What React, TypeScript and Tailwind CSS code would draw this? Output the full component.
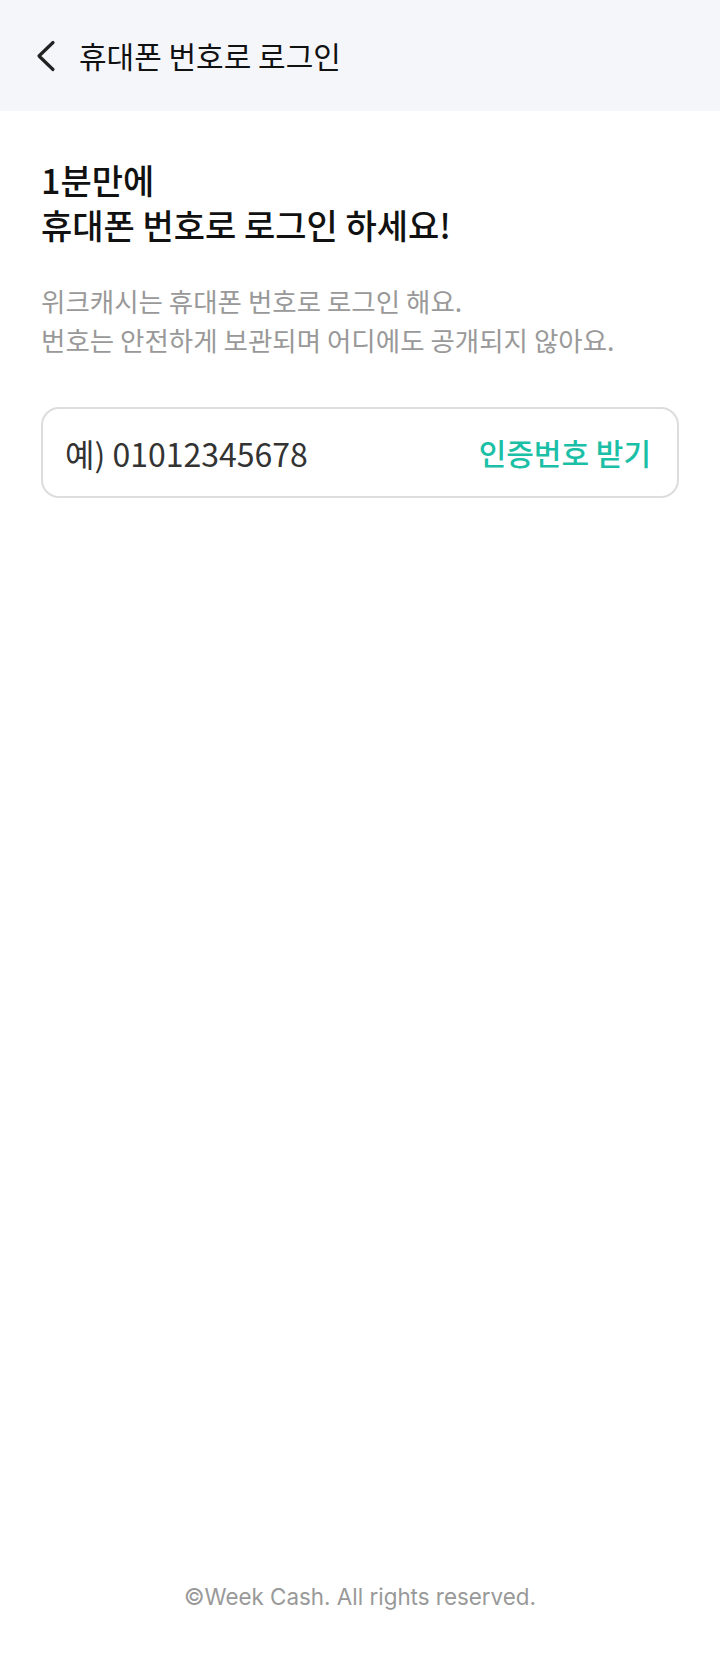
const kr = { fontFamily: '"Noto Sans CJK KR", "Noto Sans", sans-serif' }

function BackIcon() {
  return (
    <svg width="20" height="32" viewBox="0 0 20 32" fill="none" aria-hidden="true">
      <polyline
        points="17,2.5 3,16 17,29.5"
        stroke="#222"
        strokeWidth="3.2"
        strokeLinecap="round"
        strokeLinejoin="round"
      />
    </svg>
  )
}

export default function App() {
  return (
    <div className="min-h-screen bg-white flex flex-col" style={kr}>
      <header className="h-[111px] bg-[#f5f6fa] flex items-center pl-[36px]">
        <button className="flex items-center" aria-label="뒤로">
          <BackIcon />
        </button>
        <h1 className="ml-[23px] text-[30px] font-normal text-[#111]">휴대폰 번호로 로그인</h1>
      </header>

      <main className="flex-1 px-[41px] pt-[46px]">
        <h2 className="text-[34px] leading-[45px] font-medium text-[#111]">
          1분만에
          <br />
          휴대폰 번호로 로그인 하세요!
        </h2>
        <p className="mt-[34px] text-[26.5px] leading-[39px] text-[#999]">
          위크캐시는 휴대폰 번호로 로그인 해요.
          <br />
          번호는 안전하게 보관되며 어디에도 공개되지 않아요.
        </p>

        <div className="mt-[48px] h-[91px] rounded-[18px] border-2 border-[#dddddd] flex items-center justify-between pl-[22px] pr-[26px]">
          <input
            type="tel"
            placeholder="예) 01012345678"
            className="flex-1 min-w-0 bg-transparent outline-none text-[32px] text-[#333] placeholder:text-[#333]"
          />
          <button className="text-[30px] font-medium text-[#1bbfa6]">인증번호 받기</button>
        </div>
      </main>

      <footer className="pb-[66px] text-center text-[22.4px] text-[#999]" style={{ fontFamily: "Inter, sans-serif" }}>
        ©Week Cash. All rights reserved.
      </footer>
    </div>
  )
}
